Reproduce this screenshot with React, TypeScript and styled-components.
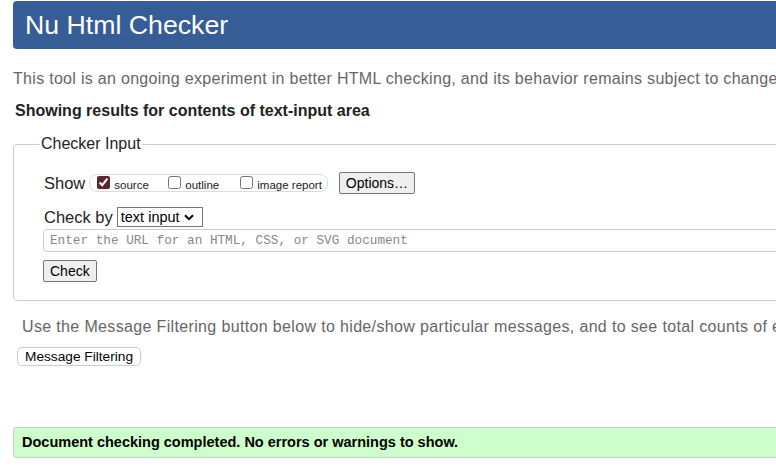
import React from "react";
import styled, { createGlobalStyle } from "styled-components";

const Global = createGlobalStyle`
  html, body { margin: 0; padding: 0; background: #fff; overflow: hidden; }
  body { font-family: "Liberation Sans", Arial, sans-serif; color: #222; }
`;

const chevron =
  "data:image/svg+xml;utf8," +
  encodeURIComponent(
    '<svg xmlns="http://www.w3.org/2000/svg" width="10" height="7" viewBox="0 0 10 7"><path d="M1 1.2 L5 5.2 L9 1.2" fill="none" stroke="#000" stroke-width="2"/></svg>'
  );

const Page = styled.div`
  width: 1100px;
  padding: 1px 0 0 13px;
  box-sizing: border-box;
`;

const Header = styled.h1`
  margin: 0;
  height: 48px;
  background: #365d95;
  color: #fff;
  font-weight: normal;
  font-size: 26.7px;
  line-height: 48px;
  padding-left: 12px;
  border-radius: 4px;
`;

const Intro = styled.p`
  margin: 20px 0 0 0;
  font-size: 16px;
  line-height: 20px;
  letter-spacing: 0.3px;
  color: #666;
  white-space: nowrap;
`;

const Showing = styled.p`
  margin: 12px 0 0 2px;
  font-size: 16px;
  line-height: 20px;
  font-weight: bold;
  color: #222;
  white-space: nowrap;
`;

const Fieldset = styled.fieldset`
  margin: 14px 0 0 0;
  padding: 19px 0 18px 30px;
  border: 1px solid #ccc;
  border-radius: 4px;
`;

const Legend = styled.legend`
  margin-left: -4px;
  padding: 0 1px;
  font-size: 16px;
  line-height: 18px;
  color: #222;
`;

const Row = styled.div<{ $gap?: number; $ml?: number }>`
  display: flex;
  align-items: center;
  margin-top: ${(p) => p.$gap ?? 0}px;
  margin-left: ${(p) => p.$ml ?? 0}px;
`;

const Label = styled.span`
  font-size: 16.5px;
  color: #222;
  margin-right: 4px;
`;

const Group = styled.div`
  display: flex;
  align-items: center;
  border: 1px solid #ddd;
  border-radius: 8px;
  height: 16px;
  padding: 0 5px 0 7px;
`;

const Opt = styled.label<{ $w?: number }>`
  display: flex;
  align-items: center;
  width: ${(p) => (p.$w ? `${p.$w}px` : "auto")};
  font-size: 11.5px;
  color: #222;
  white-space: nowrap;
  padding-top: 3px;
`;

const Box = styled.input`
  margin: 0 4px 0 0;
  width: 13px;
  height: 13px;
  accent-color: #5c2530;
  position: relative;
  top: -2px;
`;

const Btn = styled.button<{ $ml?: number }>`
  margin-left: ${(p) => p.$ml ?? 0}px;
  font-family: "Liberation Sans", Arial, sans-serif;
  font-size: 14px;
  height: 22px;
  padding: 0 6px;
  border: 1px solid #767676;
  border-radius: 2px;
  background: #efefef;
  color: #000;
  line-height: 20px;
`;

const Select = styled.select`
  appearance: none;
  -webkit-appearance: none;
  font-family: "Liberation Sans", Arial, sans-serif;
  font-size: 14.5px;
  height: 20px;
  width: 86px;
  padding: 0 0 0 3px;
  border: 1px solid #767676;
  border-radius: 0;
  background: #fff url("${chevron}") no-repeat right 8px center;
  color: #000;
`;

const UrlInput = styled.input`
  display: block;
  box-sizing: border-box;
  width: 1000px;
  height: 23px;
  margin: 2px 0 0 -1px;
  padding: 0 6px;
  border: 1px solid #ccc;
  border-radius: 4px;
  font-family: "Liberation Mono", "DejaVu Sans Mono", monospace;
  font-size: 12.7px;
  &::placeholder { color: #888; }
`;

const Note = styled.p`
  margin: 16px 0 0 9px;
  font-size: 16px;
  line-height: 20px;
  letter-spacing: 0.35px;
  color: #666;
  white-space: nowrap;
`;

const FilterBtn = styled.button`
  display: block;
  margin: 10px 0 0 4px;
  height: 19px;
  padding: 0 7px;
  font-family: "Liberation Sans", Arial, sans-serif;
  font-size: 13.7px;
  line-height: 17px;
  background: #fff;
  color: #000;
  border: 1px solid #ccc;
  border-radius: 5px;
`;

const Success = styled.div`
  margin-top: 61px;
  height: 29px;
  line-height: 29px;
  padding-left: 8px;
  background: #ccffcc;
  border: 1px solid #ccc;
  border-radius: 3px;
  font-size: 14.5px;
  font-weight: bold;
  color: #000;
`;

export default function App() {
  return (
    <>
      <Global />
      <Page>
        <Header>Nu Html Checker</Header>
        <Intro>
          This tool is an ongoing experiment in better HTML checking, and its behavior remains subject to change
        </Intro>
        <Showing>Showing results for contents of text-input area</Showing>
        <Fieldset>
          <Legend>Checker Input</Legend>
          <Row>
            <Label>Show</Label>
            <Group>
              <Opt $w={71}>
                <Box type="checkbox" defaultChecked />
                source
              </Opt>
              <Opt $w={72}>
                <Box type="checkbox" />
                outline
              </Opt>
              <Opt>
                <Box type="checkbox" />
                image report
              </Opt>
            </Group>
            <Btn $ml={11}>Options…</Btn>
          </Row>
          <Row $gap={13}>
            <Label>Check by</Label>
            <Select defaultValue="text">
              <option value="text">text input</option>
              <option value="address">address</option>
              <option value="file">file upload</option>
            </Select>
          </Row>
          <UrlInput placeholder="Enter the URL for an HTML, CSS, or SVG document" />
          <Row $gap={8} $ml={-1}>
            <Btn>Check</Btn>
          </Row>
        </Fieldset>
        <Note>
          Use the Message Filtering button below to hide/show particular messages, and to see total counts of errors and warnings.
        </Note>
        <FilterBtn>Message Filtering</FilterBtn>
        <Success>Document checking completed. No errors or warnings to show.</Success>
      </Page>
    </>
  );
}
